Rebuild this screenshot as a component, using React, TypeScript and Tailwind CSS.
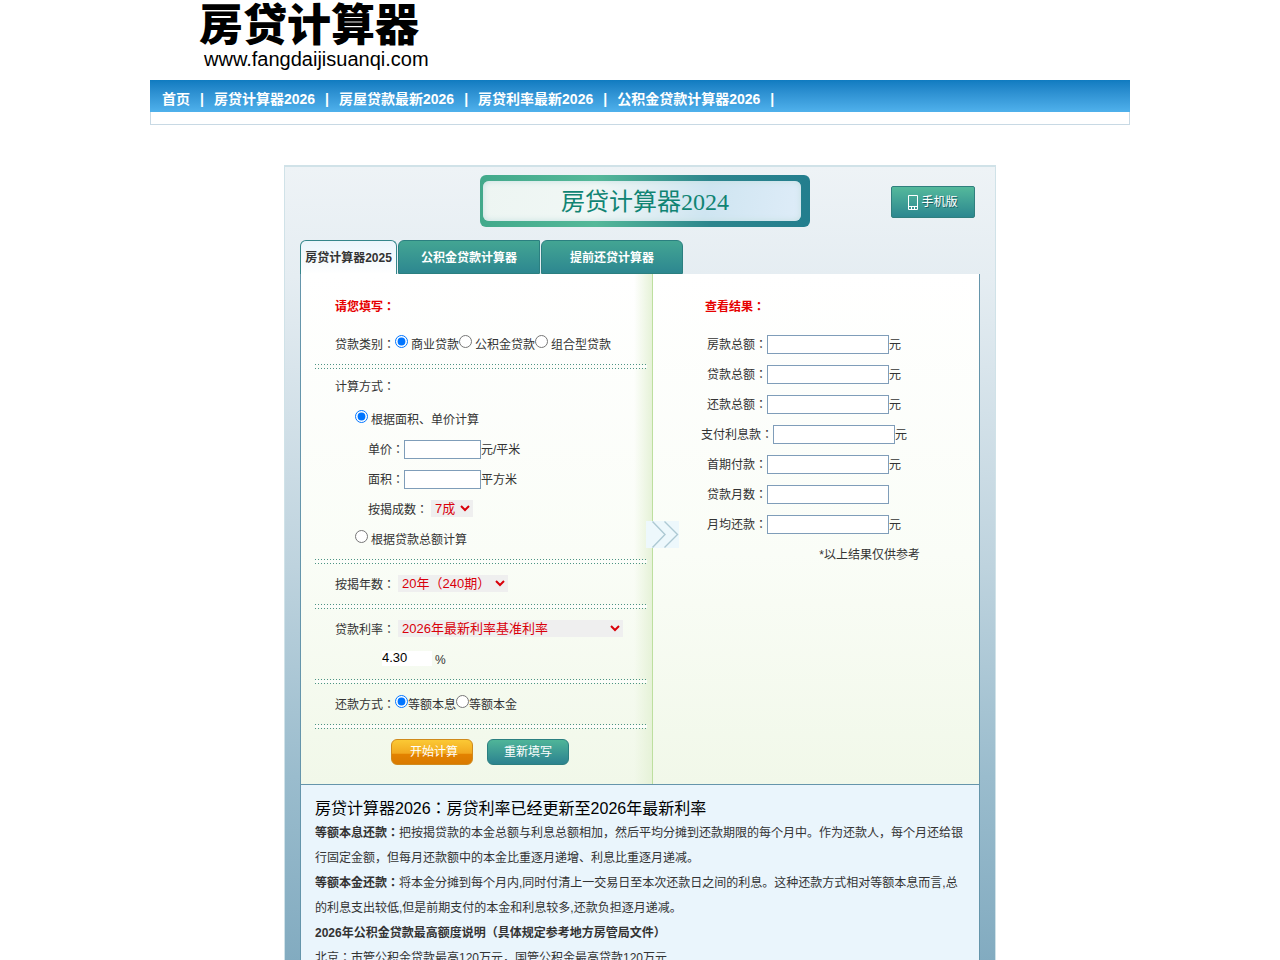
import type { ReactNode } from 'react';

const navItems = ['首页', '房贷计算器2026', '房屋贷款最新2026', '房贷利率最新2026', '公积金贷款计算器2026'];

const results = [
  { id: 'house-total', label: '房款总额：', unit: '元' },
  { id: 'loan-total', label: '贷款总额：', unit: '元' },
  { id: 'repay-total', label: '还款总额：', unit: '元' },
  { id: 'interest', label: '支付利息款：', unit: '元' },
  { id: 'first-pay', label: '首期付款：', unit: '元' },
  { id: 'months', label: '贷款月数：', unit: '' },
  { id: 'monthly', label: '月均还款：', unit: '元' },
];

const boxClass = 'mb-0.5 h-[19px] border border-[#7f9db9] bg-white px-0.5 text-[13px] outline-none';
const selectClass = 'mb-1 ml-[3px] h-[17px] bg-[#efefef] text-[13px] leading-[17px] text-[#d9000a]';

function Row({ children, className = '' }: { children: ReactNode; className?: string }) {
  return <div className={`flex h-[30px] items-center whitespace-nowrap pt-0.5 ${className}`}>{children}</div>;
}

function Divider() {
  return (
    <div className="flex h-[15px] items-center pl-3.5 pr-[5px]">
      <div className="h-[5px] w-full bg-[linear-gradient(to_bottom,transparent_1px,#fbfdf9_1px,#fbfdf9_4px,transparent_4px),repeating-linear-gradient(to_right,#4c9384_0,#4c9384_1px,transparent_1px,transparent_3px)]" />
    </div>
  );
}

function Radio({ name, label, checked, spaced }: { name: string; label: string; checked?: boolean; spaced?: boolean }) {
  return (
    <label className="flex items-center">
      <input type="radio" name={name} defaultChecked={checked} className={`mb-[7px] size-[13px] ${spaced ? 'mr-[3px]' : ''}`} />
      {label}
    </label>
  );
}

function Chevrons() {
  return (
    <svg className="absolute -left-[7px] top-[247px] h-[27px] w-[33px]" viewBox="0 0 33 27" aria-hidden="true">
      <rect width="33" height="27" fill="#edf8fc" />
      <path d="M6.5 0.5 L19 13.5 L6.5 26.5 M18.5 0.5 L31.5 13.5 L18.5 26.5" fill="none" stroke="#adc9d3" strokeWidth="1.4" />
    </svg>
  );
}

export default function App() {
  return (
    <div className="overflow-x-hidden bg-white font-['Liberation_Sans','Noto_Sans_CJK_JP',sans-serif] text-xs text-[#333]">
      <header className="mx-auto max-w-[980px]">
        <div className="flex h-20 flex-col pl-[49px] text-black">
          <h1 className="h-[46px] whitespace-nowrap text-[44px] font-black leading-[52px]">房贷计算器</h1>
          <p className="pl-[5px] text-[20px] leading-[26px]">www.fangdaijisuanqi.com</p>
        </div>
        <nav className="flex h-8 items-center gap-2.5 bg-gradient-to-b from-[#0f7bc0] to-[#4fb1ec] pl-3 pt-1.5 text-sm font-bold text-white">
          {navItems.map((item) => (
            <span key={item} className="flex gap-2.5 whitespace-nowrap">
              <a href="#">{item}</a>
              <span>|</span>
            </span>
          ))}
        </nav>
        <div className="h-[13px] border border-t-0 border-[#c8d9e4]" />
      </header>

      <main className="mx-auto mt-10 max-w-[712px] border border-b-0 border-t-2 border-[#d0e2e8] bg-[linear-gradient(to_bottom,#eef3f6_0px,#e5edf2_110px,#bed3de_400px,#9abccd_610px,#82abc0_795px)] px-[15px] pt-2">
        <div className="flex items-start justify-between pl-[180px] pr-[5px]">
          <div className="w-[330px] rounded-md bg-[linear-gradient(to_right,#42a98b_0%,#55b899_35%,#2d858d_70%,#237e8e_100%)] py-1.5 pl-[3px] pr-[9px]">
            <h2 className="h-10 rounded-md bg-[linear-gradient(100deg,#edf5f2_0%,#f0f7f5_35%,#cfe5f1_70%,#deecf8_100%)] pl-[6px] text-center font-['Liberation_Serif','Noto_Sans_CJK_JP',serif] text-2xl leading-[42px] text-[#108473] shadow-[inset_0_0_6px_#c5dfe0]">
              房贷计算器2024
            </h2>
          </div>
          <button className="mt-[11px] flex h-8 w-[84px] items-center justify-center gap-[3px] rounded-xs border border-[#307f7e] bg-gradient-to-b from-[#54b99b] to-[#2c878f] text-xs text-white [text-shadow:1px_1px_0_#1d6265]">
            <svg className="h-[15px] w-2.5" viewBox="0 0 10 15" aria-hidden="true">
              <path d="M.5 .5h9v14h-9zM.5 11.5h9M3.5 12v2M6.5 12v2" fill="none" stroke="white" />
            </svg>
            手机版
          </button>
        </div>

        <div className="mt-[13px] flex gap-px font-bold">
          <button className="h-[34px] w-[97px] whitespace-nowrap rounded-t-md border border-b-0 border-[#34868a] bg-gradient-to-b from-[#eaf5fb] to-white">房贷计算器2025</button>
          <button className="h-[34px] w-[142px] rounded-tl-md border border-[#2b7f80] bg-gradient-to-b from-[#43a593] to-[#2d8790] pt-0.5 text-white">公积金贷款计算器</button>
          <button className="h-[34px] w-[142px] rounded-t-md border border-[#2b7f80] bg-gradient-to-b from-[#43a593] to-[#2d8790] pt-0.5 text-white">提前还贷计算器</button>
        </div>

        <form className="flex border-x border-b border-[#6595ab] bg-[linear-gradient(to_bottom,#ffffff,#fafdf7_55%,#f1f8e9)]" onSubmit={(e) => e.preventDefault()}>
          <div className="w-[351px] bg-[linear-gradient(to_left,#e6f2d8,transparent_18px)] pb-[19px] pt-[17px]">
            <Row className="pl-[34px] font-bold text-[#e60000]">请您填写：</Row>
            <Row className="mt-2 pl-[34px]">
              贷款类别：
              <Radio name="kind" label="商业贷款" checked spaced />
              <Radio name="kind" label="公积金贷款" spaced />
              <Radio name="kind" label="组合型贷款" spaced />
            </Row>
            <Divider />
            <p className="mb-1 pl-[34px] leading-[26px]">计算方式：</p>
            <Row className="pl-[54px]">
              <Radio name="method" label="根据面积、单价计算" checked spaced />
            </Row>
            <Row className="pl-[67px]">
              <label htmlFor="price">单价：</label>
              <input id="price" className={`w-[77px] ${boxClass}`} />
              元/平米
            </Row>
            <Row className="pl-[67px]">
              <label htmlFor="area">面积：</label>
              <input id="area" className={`w-[77px] ${boxClass}`} />
              平方米
            </Row>
            <Row className="pl-[67px]">
              <label htmlFor="ratio">按揭成数：</label>
              <select id="ratio" className={`${selectClass} w-[42px]`}>
                <option>7成</option>
              </select>
            </Row>
            <Row className="pl-[54px]">
              <Radio name="method" label="根据贷款总额计算" spaced />
            </Row>
            <Divider />
            <Row className="pl-[34px]">
              <label htmlFor="years">按揭年数：</label>
              <select id="years" className={`${selectClass} w-[110px]`}>
                <option>20年（240期）</option>
              </select>
            </Row>
            <Divider />
            <Row className="pl-[34px]">
              <label htmlFor="rate">贷款利率：</label>
              <select id="rate" className={`${selectClass} w-[225px]`}>
                <option>2026年最新利率基准利率</option>
              </select>
            </Row>
            <Row className="gap-[3px] pl-[81px]">
              <input aria-label="利率" defaultValue="4.30" className="mb-1 h-[15px] w-[50px] bg-white text-[13px] text-black" />%
            </Row>
            <Divider />
            <Row className="pl-[34px]">
              还款方式：
              <Radio name="repay" label="等额本息" checked />
              <Radio name="repay" label="等额本金" />
            </Row>
            <Divider />
            <div className="flex gap-3.5 pl-[90px] pt-[5px] text-white">
              <button className="h-[26px] w-[82px] rounded-md border border-[#d08a1c] bg-[linear-gradient(to_bottom,#fbc935,#f2a91f_55%,#e38200_60%,#d97a00)] pl-1">开始计算</button>
              <button type="reset" className="h-[26px] w-[82px] rounded-md border border-[#2b7f80] bg-gradient-to-b from-[#4fb598] to-[#2c828f]">重新填写</button>
            </div>
          </div>
          <div className="relative flex-1 border-l border-[#bddf9f] pt-[17px]">
            <Chevrons />
            <Row className="pl-[52px] font-bold text-[#e60000]">查看结果：</Row>
            <div className="mt-2 pr-6">
              {results.map((r) => (
                <Row key={r.id} className="justify-center">
                  <label htmlFor={r.id}>{r.label}</label>
                  <input id={r.id} className={`w-[122px] ${boxClass}`} />
                  <span className="w-3">{r.unit}</span>
                </Row>
              ))}
            </div>
            <Row className="justify-end pr-[59px]">*以上结果仅供参考</Row>
          </div>
        </form>

        <section className="border-x border-[#6595ab] bg-[#eaf5fc] px-3.5 pb-4 pt-[11px] leading-[25px]">
          <h2 className="text-base leading-[25px] text-black">房贷计算器2026：房贷利率已经更新至2026年最新利率</h2>
          <p><b>等额本息还款：</b>把按揭贷款的本金总额与利息总额相加，然后平均分摊到还款期限的每个月中。作为还款人，每个月还给银行固定金额，但每月还款额中的本金比重逐月递增、利息比重逐月递减。</p>
          <p><b>等额本金还款：</b>将本金分摊到每个月内,同时付清上一交易日至本次还款日之间的利息。这种还款方式相对等额本息而言,总的利息支出较低,但是前期支付的本金和利息较多,还款负担逐月递减。</p>
          <p><b>2026年公积金贷款最高额度说明（具体规定参考地方房管局文件）</b></p>
          <p>北京：市管公积金贷款最高120万元，国管公积金最高贷款120万元</p>
        </section>
      </main>
    </div>
  );
}
